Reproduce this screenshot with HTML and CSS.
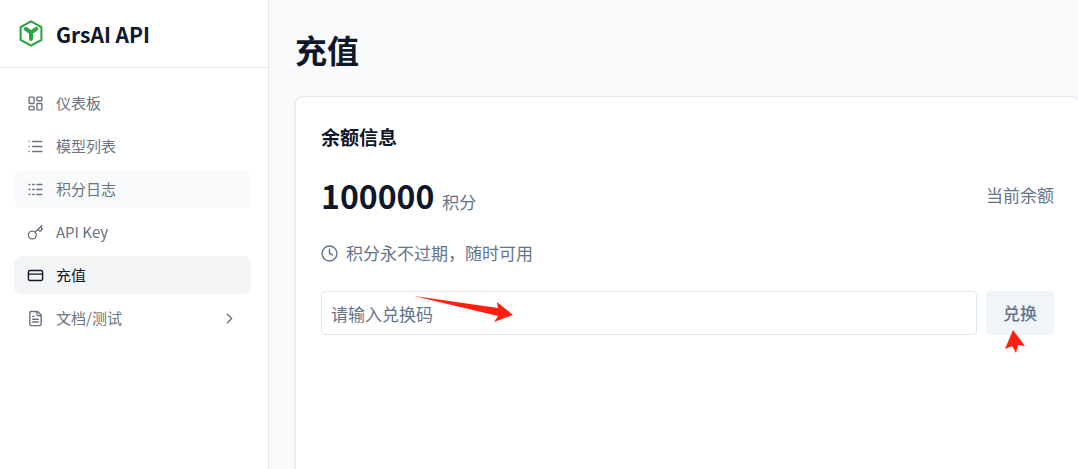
FILE: index.html
```html
<!DOCTYPE html>
<html lang="zh-CN">
<head>
<meta charset="utf-8">
<meta name="viewport" content="width=device-width, initial-scale=1">
<title>充值 - GrsAI API</title>
<link rel="stylesheet" href="styles.css">
</head>
<body>
<div class="app">
  <aside class="sidebar">
    <div class="brand">
      <svg class="brand-logo" viewBox="0 0 26 28" aria-hidden="true">
        <path d="M13 1.300 23.400 7.200V19.800L13 25.700 2.600 19.800V7.200Z" fill="none" stroke="#27a13c" stroke-width="2"/>
        <path d="M7.800 8.800 13 12.500 18.200 8.800M13 12.500V19" fill="none" stroke="#25a83c" stroke-width="4" stroke-linecap="round" stroke-linejoin="round"/>
      </svg>
      <span class="brand-name">GrsAI API</span>
    </div>
    <nav class="nav">
      <a class="nav-item" href="#">
        <svg class="icon" viewBox="0 0 24 24" aria-hidden="true"><rect x="3" y="3" width="7" height="9" rx="1"/><rect x="14" y="3" width="7" height="5" rx="1"/><rect x="14" y="12" width="7" height="9" rx="1"/><rect x="3" y="16" width="7" height="5" rx="1"/></svg>
        <span>仪表板</span>
      </a>
      <a class="nav-item" href="#">
        <svg class="icon" viewBox="0 0 24 24" aria-hidden="true"><path d="M3 5h.01M3 12h.01M3 19h.01M8 5h13M8 12h13M8 19h13"/></svg>
        <span>模型列表</span>
      </a>
      <a class="nav-item hovered" href="#">
        <svg class="icon" viewBox="0 0 24 24" aria-hidden="true"><path d="M3 5h1M3 12h1M3 19h1M8 5h2M8 12h2M8 19h2M14 5h7M14 12h7M14 19h7"/></svg>
        <span>积分日志</span>
      </a>
      <a class="nav-item" href="#">
        <svg class="icon" viewBox="0 0 24 24" aria-hidden="true"><circle cx="7.500" cy="15.500" r="5.500"/><path d="m21 2-9.600 9.600M15.500 7.500l2.300 2.300a1 1 0 0 0 1.400 0l2.100-2.100a1 1 0 0 0 0-1.400L19 4"/></svg>
        <span>API Key</span>
      </a>
      <a class="nav-item active" href="#" aria-current="page">
        <svg class="icon" viewBox="0 0 24 24" aria-hidden="true"><rect x="2" y="5" width="20" height="14" rx="2"/><path d="M2 10h20"/></svg>
        <span>充值</span>
      </a>
      <a class="nav-item" href="#">
        <svg class="icon" viewBox="0 0 24 24" aria-hidden="true"><path d="M15 2H6a2 2 0 0 0-2 2v16a2 2 0 0 0 2 2h12a2 2 0 0 0 2-2V7ZM14 2v4a2 2 0 0 0 2 2h4M10 9H8M16 13H8M16 17H8"/></svg>
        <span>文档/测试</span>
        <svg class="icon chevron" viewBox="0 0 24 24" aria-hidden="true"><path d="m9 18 6-6-6-6"/></svg>
      </a>
    </nav>
  </aside>
  <main class="main">
    <h1 class="page-title">充值</h1>
    <section class="card">
      <h2 class="card-title">余额信息</h2>
      <div class="balance">
        <p class="amount"><strong class="amount-value">100000</strong><span>积分</span></p>
        <span>当前余额</span>
      </div>
      <p class="notice">
        <svg class="icon" viewBox="0 0 24 24" aria-hidden="true"><circle cx="12" cy="12" r="10.500"/><path d="M12 6v6l4 2"/></svg>
        <span>积分永不过期，随时可用</span>
      </p>
      <form class="redeem">
        <div class="field">
          <input class="code" type="text" placeholder="请输入兑换码" aria-label="兑换码">
          <svg class="arrow-right" viewBox="0 0 100 28" aria-hidden="true"><path d="M0 1 84 13 83 7 99 20 80 27 84 21Z"/></svg>
        </div>
        <div class="submit">
          <button class="redeem-button" type="button">兑换</button>
          <svg class="arrow-up" viewBox="0 0 20 23" aria-hidden="true"><path d="M8 0 20 16 13 15 11 23 7 16 0 19Z"/></svg>
        </div>
      </form>
    </section>
  </main>
</div>
</body>
</html>
```
FILE: styles.css
```css
* {
  box-sizing: border-box;
}

body {
  margin: 0;
  font-family: "Noto Sans CJK SC", sans-serif;
  color: #0f172a;
  background: #f9fafc;
}

h1, h2, p {
  margin: 0;
}

.app {
  display: flex;
  min-height: 100vh;
  overflow: hidden;
}

.sidebar {
  flex: 0 0 269px;
  background: #fff;
  border-right: 1px solid #e5e7eb;
}

.brand {
  display: flex;
  align-items: center;
  gap: 12px;
  height: 68px;
  padding: 0 18px;
  border-bottom: 1px solid #e5e7eb;
}

.brand-logo {
  width: 26px;
  height: 28px;
}

.brand-name {
  font-size: 21px;
  font-weight: 700;
  line-height: 32px;
}

.nav {
  display: flex;
  flex-direction: column;
  gap: 5px;
  padding: 16px 17px 16px 14px;
}

.nav-item {
  display: flex;
  align-items: center;
  gap: 12px;
  height: 38px;
  padding: 0 13px;
  border-radius: 8px;
  color: #6b7280;
  font-size: 15px;
  line-height: 22px;
  text-decoration: none;
}

.hovered {
  background: #f9fafc;
}

.active {
  color: #111827;
  background: #f3f4f6;
}

.icon {
  flex: none;
  width: 17px;
  height: 17px;
  fill: none;
  stroke: currentColor;
  stroke-width: 2;
  stroke-linecap: round;
  stroke-linejoin: round;
}

.chevron {
  margin-left: auto;
}

.main {
  display: flex;
  flex: 1;
  flex-direction: column;
  gap: 24px;
  margin-right: -2px;
  padding: 26px 0 0 26px;
}

.page-title {
  font-size: 32px;
  font-weight: 700;
  line-height: 46px;
}

.card {
  flex: 1;
  padding: 25px;
  background: #fff;
  border: 1px solid #e2e8f0;
  border-bottom: 0;
  border-radius: 8px 8px 0 0;
  box-shadow: 0 1px 3px #0000001a;
  color: #64748b;
  font-size: 17px;
  line-height: 26px;
}

.card-title {
  color: #0f172a;
  font-size: 19px;
  font-weight: 700;
  line-height: 30px;
}

.balance {
  display: flex;
  align-items: center;
  justify-content: space-between;
  margin-top: 22px;
}

.amount {
  display: flex;
  align-items: baseline;
  gap: 8px;
}

.amount-value {
  color: #0f172a;
  font-size: 32px;
  line-height: 42px;
}

.notice {
  display: flex;
  align-items: center;
  gap: 8px;
  margin-top: 24px;
}

.redeem {
  display: flex;
  gap: 9px;
  margin-top: 25px;
}

.field {
  position: relative;
  flex: 1;
}

.submit {
  position: relative;
}

.code {
  display: block;
  width: 100%;
  height: 44px;
  padding: 0 9px;
  border: 1px solid #e2e8f0;
  border-radius: 4px;
  background: #fff;
  color: #0f172a;
  font: inherit;
}

.code::placeholder {
  color: #64748b;
  opacity: 1;
}

.redeem-button {
  height: 44px;
  padding: 0 17px;
  border: 0;
  border-radius: 4px;
  background: #f1f5f9;
  color: #64748b;
  font: inherit;
  font-weight: 500;
}

.arrow-right,
.arrow-up {
  position: absolute;
  fill: #ff1e10;
  pointer-events: none;
}

.arrow-right {
  top: 4px;
  left: 93px;
  width: 100px;
  height: 28px;
}

.arrow-up {
  top: 39px;
  left: 19px;
  width: 20px;
  height: 23px;
}
```
